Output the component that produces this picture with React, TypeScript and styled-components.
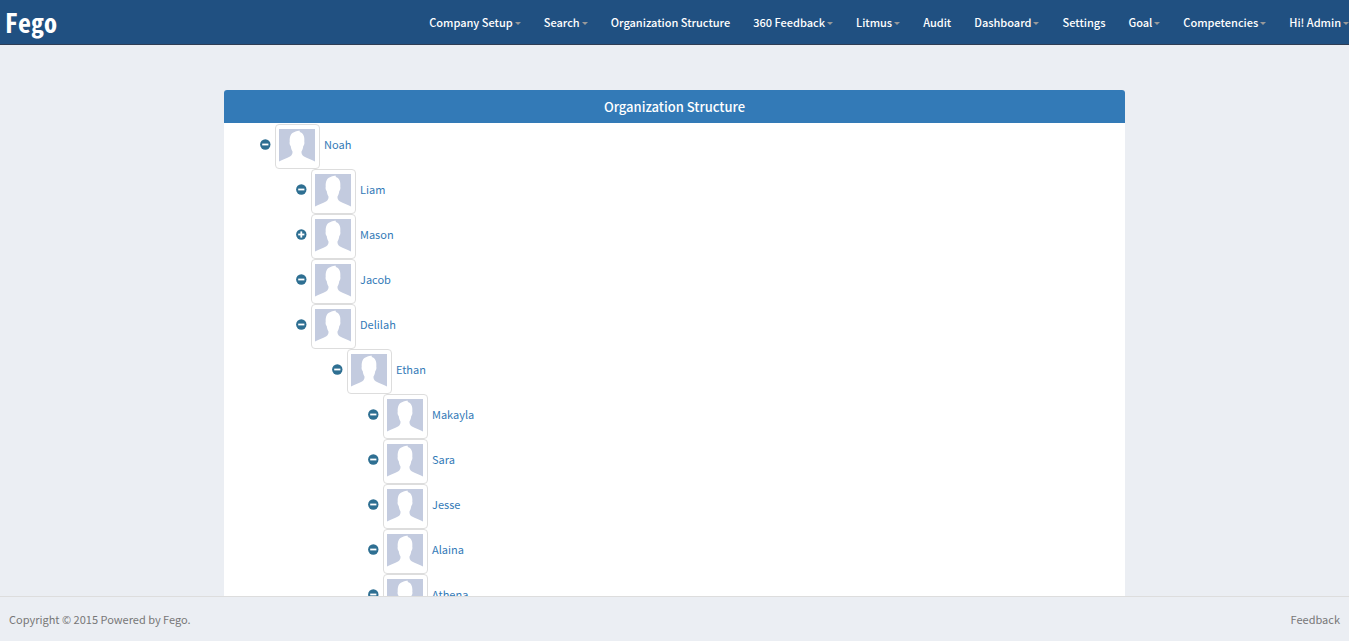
import React, { useState } from "react";
import styled, { createGlobalStyle } from "styled-components";

const GlobalStyle = createGlobalStyle`
  *, *::before, *::after { box-sizing: border-box; }
  body {
    margin: 0;
    background: #ebeef3;
    font-family: "Noto Sans CJK SC", "Noto Sans", sans-serif;
    font-size: 11px;
    line-height: 20px;
    color: #777;
  }
  a { text-decoration: none; }
`;

const Page = styled.div`
  display: flex;
  flex-direction: column;
  height: 100vh;
`;

const Header = styled.header`
  display: flex;
  flex: none;
  align-items: center;
  justify-content: space-between;
  height: 45px;
  padding-left: 5px;
  background: #205081;
  border-bottom: 1px solid #2e3d54;
`;

const Brand = styled.a`
  color: #fff;
  font-family: "Noto Sans Mono CJK SC", "Noto Sans CJK SC", monospace;
  font-size: 26px;
  font-weight: 700;
  line-height: 42px;
`;

const Menu = styled.ul`
  display: flex;
  gap: 23px;
  margin: 0;
  padding: 0;
  list-style: none;
`;

const MenuLink = styled.a`
  display: flex;
  align-items: center;
  gap: 2px;
  color: #fff;
  font-weight: 500;
  line-height: 42px;
  white-space: nowrap;
`;

const Caret = styled.span`
  margin-top: 3px;
  border: 3px solid transparent;
  border-top-color: #999;
  border-bottom: 0;
`;

const Main = styled.main`
  flex: 1;
  min-height: 0;
  padding: 45px 224px 0;
  overflow-y: auto;
  scrollbar-width: none;
`;

const Panel = styled.section`
  background: #fff;
  border-radius: 3px;
`;

const PanelTitle = styled.h1`
  margin: 0;
  padding: 7px 0 6px;
  background: #337ab7;
  border-radius: 3px 3px 0 0;
  color: #fff;
  font-size: 13px;
  font-weight: 500;
  line-height: 20px;
  text-align: center;
`;

const TreeRoot = styled.div`
  padding-top: 1px;
`;

const Branch = styled.ul`
  margin: 0;
  padding: 0 0 0 36px;
  list-style: none;
`;

const Row = styled.div`
  display: flex;
  align-items: center;
  gap: 4px;
  height: 45px;
`;

const Toggle = styled.button`
  display: flex;
  padding: 0;
  margin-bottom: 4px;
  border: 0;
  background: none;
  cursor: pointer;
`;

const Photo = styled.span`
  display: block;
  width: 45px;
  height: 45px;
  padding: 3px;
  border: 1px solid #ddd;
  border-radius: 4px;
  background: #fff;
`;

const PersonLink = styled.a`
  margin-bottom: 5px;
  color: #337ab7;
`;

const Footer = styled.footer`
  display: flex;
  flex: none;
  align-items: center;
  justify-content: space-between;
  height: 45px;
  padding: 0 9px;
  border-top: 1px solid #ddd;
`;

const FooterLink = styled.a`
  color: #777;
`;

const menuItems = [
  { label: "Company Setup", dropdown: true },
  { label: "Search", dropdown: true },
  { label: "Organization Structure", dropdown: false },
  { label: "360 Feedback", dropdown: true },
  { label: "Litmus", dropdown: true },
  { label: "Audit", dropdown: false },
  { label: "Dashboard", dropdown: true },
  { label: "Settings", dropdown: false },
  { label: "Goal", dropdown: true },
  { label: "Competencies", dropdown: true },
  { label: "Hi! Admin", dropdown: true },
];

interface Person {
  name: string;
  collapsed?: boolean;
  reports?: Person[];
}

const organization: Person = {
  name: "Noah",
  reports: [
    { name: "Liam" },
    { name: "Mason", collapsed: true },
    { name: "Jacob" },
    {
      name: "Delilah",
      reports: [
        {
          name: "Ethan",
          reports: [
            { name: "Makayla" },
            { name: "Sara" },
            { name: "Jesse" },
            { name: "Alaina" },
            { name: "Athena" },
          ],
        },
      ],
    },
  ],
};

const ToggleIcon = ({ open }: { open: boolean }) => (
  <svg width="11" height="11" viewBox="0 0 11 11" aria-hidden="true">
    <circle cx="5.3" cy="5.5" r="5.2" fill="#2e6f92" />
    <rect x="2.2" y="4.6" width="6.2" height="1.8" fill="#fff" />
    {!open && <rect x="4.4" y="2.4" width="1.8" height="6.2" fill="#fff" />}
  </svg>
);

const Silhouette = () => (
  <svg width="37" height="37" viewBox="0 0 37 37" aria-hidden="true">
    <rect x="0" y="1" width="36" height="36" fill="#c3cbdf" />
    <path
      d="M0 37V33.5C3 31.5 8 30 11 28.4C13 27.3 13.7 25.500 13.500 23.500C12.500 22 12 20 11.700 18C10.700 17.300 10.300 15 10.700 13.700C10.500 9 11.500 5.500 15 4.200C17 3 19.500 2.800 21 2.700C20.600 3.300 20.700 3.700 20.800 4C24.500 5 25.800 9 25.300 13.700C25.700 15 25.300 17.300 24.300 18C24 20 23.500 22 22.500 23.500C22.300 25.500 23 27.300 25 28.400C28 30 33 31.500 36 33.500V37Z"
      fill="#fff"
    />
  </svg>
);

const TreeNode = ({ person }: { person: Person }) => {
  const [open, setOpen] = useState(!person.collapsed);
  return (
    <li>
      <Row>
        <Toggle
          type="button"
          aria-expanded={open}
          aria-label={person.name}
          onClick={() => setOpen(!open)}
        >
          <ToggleIcon open={open} />
        </Toggle>
        <Photo>
          <Silhouette />
        </Photo>
        <PersonLink href="#">{person.name}</PersonLink>
      </Row>
      {open && person.reports && (
        <Branch>
          {person.reports.map((report) => (
            <TreeNode key={report.name} person={report} />
          ))}
        </Branch>
      )}
    </li>
  );
};

export default function App() {
  return (
    <>
      <GlobalStyle />
      <Page>
        <Header>
          <Brand href="#">Fego</Brand>
          <nav>
            <Menu>
              {menuItems.map((item) => (
                <li key={item.label}>
                  <MenuLink href="#">
                    {item.label}
                    {item.dropdown && <Caret />}
                  </MenuLink>
                </li>
              ))}
            </Menu>
          </nav>
        </Header>
        <Main>
          <Panel>
            <PanelTitle>Organization Structure</PanelTitle>
            <TreeRoot>
              <Branch>
                <TreeNode person={organization} />
              </Branch>
            </TreeRoot>
          </Panel>
        </Main>
        <Footer>
          <span>Copyright © 2015 Powered by Fego.</span>
          <FooterLink href="#">Feedback</FooterLink>
        </Footer>
      </Page>
    </>
  );
}
